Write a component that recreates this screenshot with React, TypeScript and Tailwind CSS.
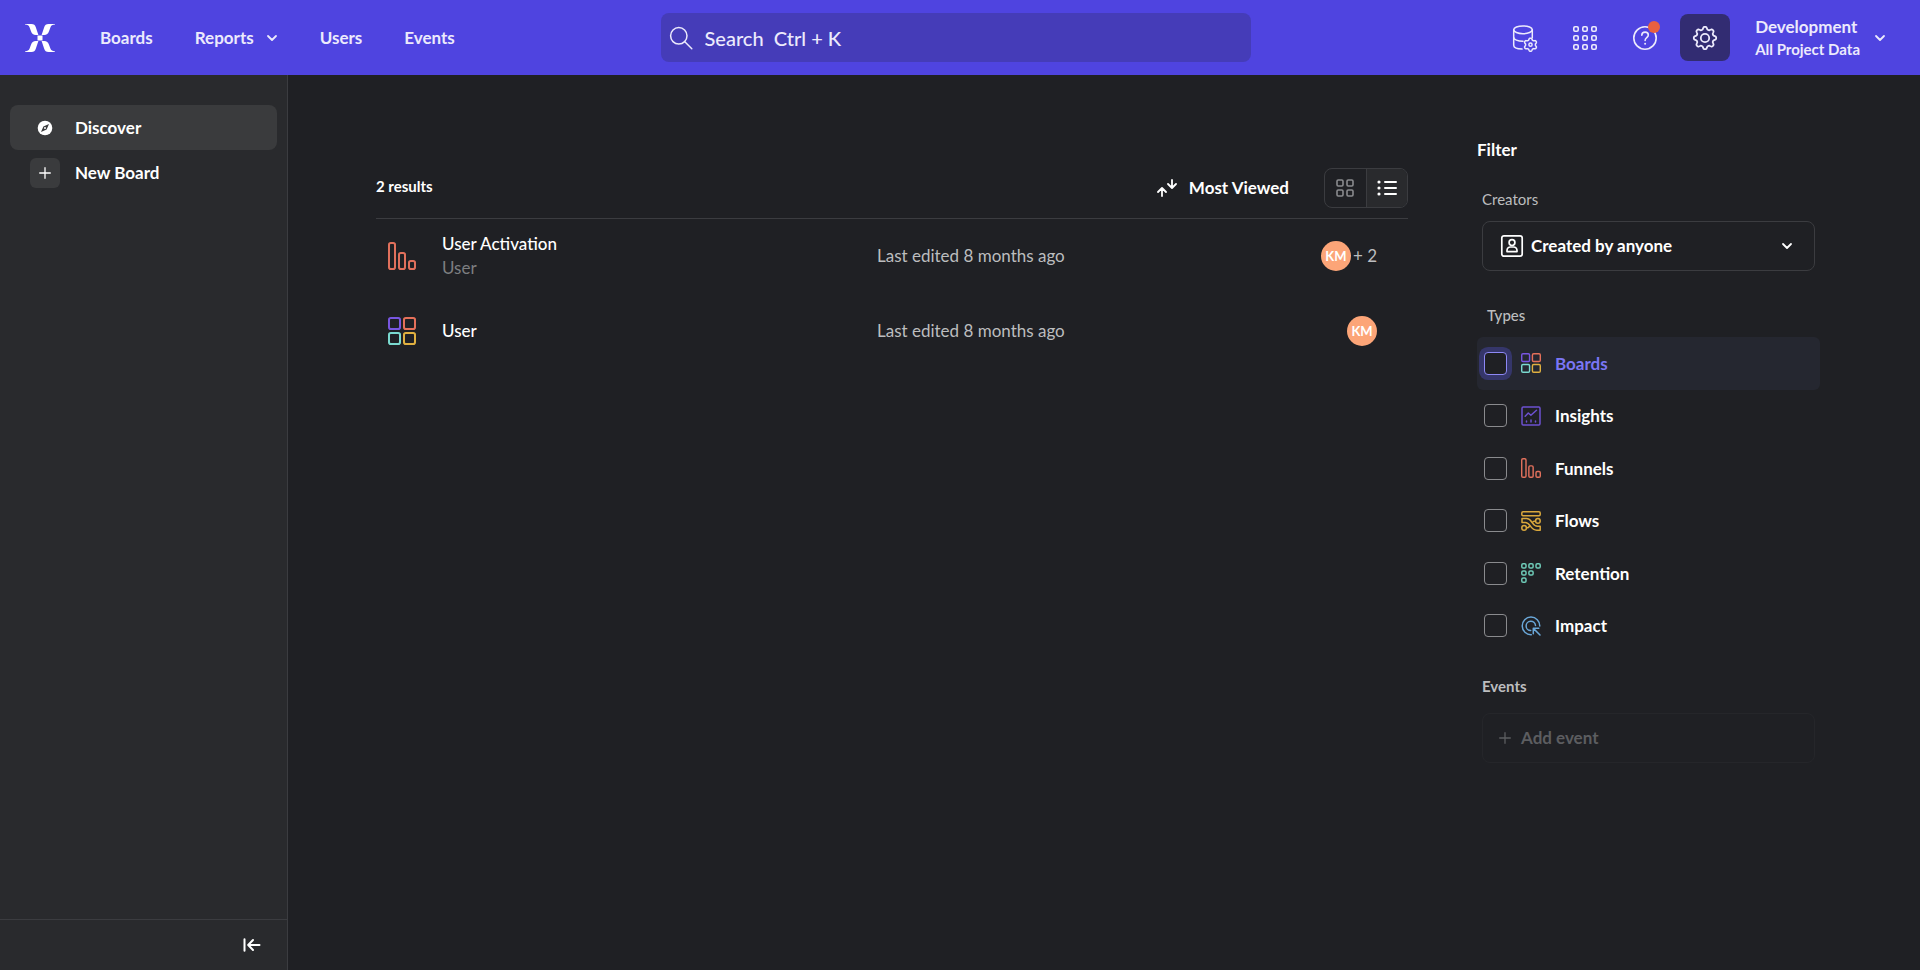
import React, { useState } from 'react';

type IconProps = {
  className?: string;
};

// closed wavy outline, one bump per tooth, first tooth pointing up
const gearPath = (cx: number, cy: number, r: number, depth: number, teeth: number) => {
  const points: string[] = [];
  for (let i = 0; i < 96; i++) {
    const a = (i / 96) * Math.PI * 2;
    const wave = Math.tanh(1.6 * Math.cos(teeth * a));
    const d = r + depth * wave;
    points.push(`${(cx + d * Math.sin(a)).toFixed(2)} ${(cy - d * Math.cos(a)).toFixed(2)}`);
  }
  return `M${points.join('L')}Z`;
};

const Logo = () => (
  <svg viewBox="0 0 30 28" className="h-7 w-[30px] fill-white" aria-hidden="true">
    <path d="M0 0h6.400c2.600 0 3.600.9 4.400 3.200L13.400 11h-2.600c-2.600 0-3.900-1.200-4.700-3.500L4.600 3.400C3.900 1.500 2.600.7 0 .6Z" />
    <path d="M30 0h-6.400c-2.600 0-3.600.9-4.400 3.200L16.600 11h2.600c2.600 0 3.900-1.200 4.700-3.500l1.500-4.100C26.100 1.500 27.400.7 30 .6Z" />
    <path d="M0 28h6.400c2.600 0 3.600-.9 4.400-3.200L13.400 17h-2.600c-2.600 0-3.900 1.200-4.700 3.500l-1.500 4.100c-.7 1.900-2 2.700-4.600 2.800Z" />
    <path d="M30 28h-6.400c-2.600 0-3.600-.9-4.400-3.200L16.600 17h2.600c2.600 0 3.900 1.200 4.700 3.500l1.500 4.100c.7 1.900 2 2.700 4.600 2.800Z" />
    <rect x="12.500" y="11.500" width="5" height="5" />
  </svg>
);

const ChevronIcon = ({ className }: IconProps) => (
  <svg viewBox="0 0 12 12" className={className} fill="none" stroke="currentColor" strokeWidth="1.800" strokeLinecap="round" strokeLinejoin="round" aria-hidden="true">
    <path d="M2 4l4 4 4-4" />
  </svg>
);

const SearchIcon = () => (
  <svg viewBox="0 0 24 24" className="h-6 w-6 shrink-0" fill="none" stroke="currentColor" strokeWidth="1.500" strokeLinecap="round" aria-hidden="true">
    <circle cx="9.800" cy="9.800" r="8.200" />
    <path d="M15.800 15.800l7 7" />
  </svg>
);

const DatabaseIcon = () => (
  <svg viewBox="0 0 26 28" className="h-7 w-[26px]" fill="none" stroke="currentColor" strokeWidth="1.500" strokeLinecap="round" strokeLinejoin="round" aria-hidden="true">
    <ellipse cx="11" cy="5.800" rx="9.300" ry="3.900" />
    <path d="M1.700 5.800v15.400c0 2.100 3.700 3.700 8.300 3.900M20.300 5.800v8" />
    <path d="M1.700 13.400c0 2.100 4.100 3.900 9.300 3.900" />
    <path d={gearPath(18.500, 20.700, 5.700, 0.9, 6)} fill="#4f44e0" />
    <circle cx="18.500" cy="20.700" r="1.600" />
  </svg>
);

const AppsIcon = () => (
  <svg viewBox="0 0 24 24" className="h-6 w-6" fill="none" stroke="currentColor" strokeWidth="1.600" aria-hidden="true">
    {[0.8, 9.8, 18.8].map((y) =>
      [0.8, 9.8, 18.8].map((x) => <rect key={`${x}-${y}`} x={x} y={y} width="4.400" height="4.400" rx="1.200" />)
    )}
  </svg>
);

const HelpIcon = () => (
  <svg viewBox="0 0 26 26" className="h-[26px] w-[26px]" fill="none" stroke="currentColor" strokeWidth="1.600" strokeLinecap="round" strokeLinejoin="round" aria-hidden="true">
    <circle cx="13" cy="13" r="11.200" />
    <path d="M9.800 10.300c0-2 1.400-3.200 3.300-3.200s3.200 1.200 3.200 2.900c0 2.600-3.200 2.700-3.200 5.400" />
    <path d="M13.100 18.700v.1" strokeWidth="2" />
  </svg>
);

const GearIcon = () => (
  <svg viewBox="0 0 26 26" className="h-[26px] w-[26px]" fill="none" stroke="currentColor" strokeWidth="1.800" strokeLinejoin="round" aria-hidden="true">
    <path d={gearPath(13, 13, 9.900, 1.400, 8)} />
    <circle cx="13" cy="13" r="4.200" />
  </svg>
);

const CompassIcon = () => (
  <svg viewBox="0 0 16 16" className="h-4 w-4" aria-hidden="true">
    <circle cx="8" cy="8" r="7.300" fill="#fff" />
    <path d="M12 4 9.600 9.600 4 12 6.400 6.400Z" fill="#3a3b3d" />
    <circle cx="8" cy="8" r="1" fill="#fff" />
  </svg>
);

const PlusIcon = () => (
  <svg viewBox="0 0 12 12" className="h-3 w-3" fill="none" stroke="currentColor" strokeWidth="1.300" strokeLinecap="round" aria-hidden="true">
    <path d="M6 .7v10.600M.7 6h10.600" />
  </svg>
);

const CollapseIcon = () => (
  <svg viewBox="0 0 18 14" className="h-[14px] w-[18px]" fill="none" stroke="currentColor" strokeWidth="2" strokeLinecap="round" strokeLinejoin="round" aria-hidden="true">
    <path d="M1.500 1.200v11.600M16.500 7H6M10 2 5.200 7l4.800 5" />
  </svg>
);

const SortIcon = () => (
  <svg viewBox="0 0 20 18" className="h-[18px] w-5" fill="none" stroke="currentColor" strokeWidth="1.800" strokeLinecap="round" strokeLinejoin="round" aria-hidden="true">
    <path d="M5 17V9.500M1 13l4-4 4 4" />
    <path d="M15 1v7.500M11 5l4 4 4-4" />
  </svg>
);

const GridIcon = () => (
  <svg viewBox="0 0 18 18" className="h-[18px] w-[18px]" fill="none" stroke="currentColor" strokeWidth="1.600" aria-hidden="true">
    <rect x="1" y="1" width="6" height="6" rx="1.200" />
    <rect x="11" y="1" width="6" height="6" rx="1.200" />
    <rect x="1" y="11" width="6" height="6" rx="1.200" />
    <rect x="11" y="11" width="6" height="6" rx="1.200" />
  </svg>
);

const ListIcon = () => (
  <svg viewBox="0 0 20 18" className="h-[18px] w-5" fill="none" stroke="currentColor" strokeWidth="2" strokeLinecap="round" aria-hidden="true">
    <path d="M8 3h11M8 9h11M8 15h11" />
    <path d="M2 3v.01M2 9v.01M2 15v.01" strokeWidth="3.200" />
  </svg>
);

const PersonIcon = () => (
  <svg viewBox="0 0 24 24" className="h-6 w-6" fill="none" stroke="currentColor" strokeWidth="1.700" strokeLinejoin="round" aria-hidden="true">
    <rect x="1.800" y="1.800" width="20.400" height="20.400" rx="2.200" />
    <circle cx="12" cy="8.600" r="2.900" />
    <path d="M7 17.600v-1c0-2.200 1.800-3.600 3.400-3.600h3.200c1.600 0 3.400 1.400 3.400 3.600v1Z" />
  </svg>
);

const BoardsIcon = ({ className }: IconProps) => (
  <svg viewBox="0 0 28 28" className={className} fill="none" strokeWidth="2" aria-hidden="true">
    <rect x="1" y="1" width="11" height="11" rx="1.800" stroke="#7856e0" />
    <rect x="16" y="1" width="11" height="11" rx="1.800" stroke="#e5705a" />
    <rect x="1" y="16" width="11" height="11" rx="1.800" stroke="#7ad9cf" />
    <rect x="16" y="16" width="11" height="11" rx="1.800" stroke="#e0b040" />
  </svg>
);

const FunnelsIcon = ({ className }: IconProps) => (
  <svg viewBox="0 0 28 28" className={className} fill="none" stroke="#e0705c" strokeWidth="2" aria-hidden="true">
    <rect x="1" y="1" width="6" height="26" rx="1.800" />
    <rect x="11" y="11" width="6" height="16" rx="1.800" />
    <rect x="21" y="19" width="6" height="8" rx="1.800" />
  </svg>
);

const InsightsIcon = ({ className }: IconProps) => (
  <svg viewBox="0 0 20 20" className={className} fill="none" stroke="#6c50cf" strokeWidth="1.500" strokeLinecap="round" strokeLinejoin="round" aria-hidden="true">
    <rect x="1" y="1" width="18" height="18" rx="1.200" />
    <path d="M4.200 10.200 7.300 7l2.600 2.300 5.600-5.100" />
    <path d="M5.500 15v1M10 14v2M14.500 15v1" />
  </svg>
);

const FlowsIcon = ({ className }: IconProps) => (
  <svg viewBox="0 0 20 20" className={className} fill="none" stroke="#d9a73c" strokeWidth="1.500" strokeLinejoin="round" aria-hidden="true">
    <rect x=".8" y=".8" width="18.400" height="4" rx="1.200" />
    <path d="M1 7.600h4.600c3.200 0 4.200 2 5.800 4.300s2.600 3.400 5 3.400h2.800v3.900h-3.400c-3.400 0-5-2-6.600-4.300S6.800 11.400 4.400 11.400H1Z" />
    <circle cx="16.900" cy="9.900" r="2.300" />
    <circle cx="3.100" cy="16.900" r="2.300" />
    <path d="M14.600 9.900c-2 0-2.700.6-3.400 1.700M5.400 16.900c1.700 0 2.700-.8 3.400-1.900" />
  </svg>
);

const RetentionIcon = ({ className }: IconProps) => (
  <svg viewBox="0 0 20 20" className={className} fill="none" stroke="#6fcbb8" strokeWidth="1.500" aria-hidden="true">
    <rect x=".8" y=".8" width="4.200" height="4.200" rx="1.300" />
    <rect x="7.900" y=".8" width="4.200" height="4.200" rx="1.300" />
    <rect x="15" y=".8" width="4.200" height="4.200" rx="1.300" />
    <rect x=".8" y="7.900" width="4.200" height="4.200" rx="1.300" />
    <rect x="7.900" y="7.900" width="4.200" height="4.200" rx="1.300" />
    <rect x=".8" y="15" width="4.200" height="4.200" rx="1.300" />
  </svg>
);

const ImpactIcon = ({ className }: IconProps) => (
  <svg viewBox="0 0 20 20" className={className} fill="none" stroke="#6aa7d8" strokeWidth="1.500" strokeLinecap="round" strokeLinejoin="round" aria-hidden="true">
    <path d="M10.300 18.700A8.800 8.800 0 1 1 18.800 10" />
    <path d="M9.700 14.600A4.700 4.700 0 1 1 14.500 9.500" />
    <path d="M12.300 17.800v-5.500h5.500M12.600 12.600l6.400 6.400" />
  </svg>
);

const results = [
  { name: 'User Activation', board: 'User', edited: 'Last edited 8 months ago', initials: 'KM', more: '+ 2', Icon: FunnelsIcon },
  { name: 'User', board: '', edited: 'Last edited 8 months ago', initials: 'KM', more: '', Icon: BoardsIcon },
];

const types = [
  { name: 'Boards', Icon: BoardsIcon },
  { name: 'Insights', Icon: InsightsIcon },
  { name: 'Funnels', Icon: FunnelsIcon },
  { name: 'Flows', Icon: FlowsIcon },
  { name: 'Retention', Icon: RetentionIcon },
  { name: 'Impact', Icon: ImpactIcon },
];

function Header() {
  return (
    <header className="grid h-[75px] grid-cols-[1fr_590px_1fr] items-center bg-[#4f44e0] pr-[34px] pl-[25px] text-[#eceafc]">
      <div className="flex items-center">
        <a href="#" aria-label="Home">
          <Logo />
        </a>
        <nav className="ml-[45px] flex items-center gap-[42px] text-[17px] font-bold">
          <a href="#">Boards</a>
          <button className="flex items-center gap-3">
            Reports
            <ChevronIcon className="h-3 w-3" />
          </button>
          <a href="#">Users</a>
          <a href="#">Events</a>
        </nav>
      </div>

      <label className="flex h-[49px] items-center gap-3 rounded-lg bg-[#453cb8] px-2">
        <SearchIcon />
        <input
          type="text"
          aria-label="Search"
          placeholder="Search  Ctrl + K"
          className="w-full bg-transparent text-[20px] font-medium outline-none placeholder:text-[#eceafc]"
        />
      </label>

      <div className="flex items-center justify-end">
        <div className="flex items-center gap-[35px]">
          <button aria-label="Data management">
            <DatabaseIcon />
          </button>
          <button aria-label="Apps">
            <AppsIcon />
          </button>
          <button aria-label="Help" className="relative">
            <HelpIcon />
            <span className="absolute -top-1 -right-0.5 h-3 w-3 rounded-full bg-[#e8603f]" />
          </button>
        </div>
        <button aria-label="Settings" className="ml-[22px] flex h-[47px] w-[50px] items-center justify-center rounded-lg bg-[#322c72]">
          <GearIcon />
        </button>
        <button className="ml-[25px] flex items-center gap-[14px] text-left font-bold">
          <span>
            <span className="block text-[17px] leading-[22px]">Development</span>
            <span className="block text-[15px] leading-[22px]">All Project Data</span>
          </span>
          <ChevronIcon className="h-3 w-3" />
        </button>
      </div>
    </header>
  );
}

function Sidebar() {
  return (
    <aside className="flex w-72 shrink-0 flex-col border-r border-[#3b3c40] bg-[#292a2d]">
      <nav className="flex-1 px-[10px] pt-[30px] text-[17px] font-bold text-white">
        <a href="#" className="flex h-[45px] items-center gap-[15px] rounded-lg bg-[#3a3b3d] px-5">
          <span className="flex w-[30px] justify-center">
            <CompassIcon />
          </span>
          Discover
        </a>
        <button className="flex h-[45px] w-full items-center gap-[15px] px-5">
          <span className="flex h-[30px] w-[30px] items-center justify-center rounded-md bg-[#3a3b3d]">
            <PlusIcon />
          </span>
          New Board
        </button>
      </nav>
      <div className="flex h-[51px] items-center justify-end border-t border-[#3b3c40] pr-[26px] text-white">
        <button aria-label="Collapse sidebar">
          <CollapseIcon />
        </button>
      </div>
    </aside>
  );
}

function Results() {
  return (
    <section className="min-w-0 flex-1 pt-[93px]">
      <div className="flex h-[51px] items-start justify-between border-b border-[#3b3c40] text-white">
        <h1 className="flex h-9 items-center text-[15px] font-bold">2 results</h1>
        <div className="flex items-center gap-[35px]">
          <button className="flex items-center gap-3 text-[17px] font-bold">
            <SortIcon />
            Most Viewed
          </button>
          <div className="flex h-10 w-[84px] overflow-hidden rounded-lg border border-[#3b3c40]">
            <button aria-label="Grid view" className="flex flex-1 items-center justify-center text-[#8a8b8e]">
              <GridIcon />
            </button>
            <button aria-label="List view" className="flex flex-1 items-center justify-center border-l border-[#3b3c40] bg-[#292a2d]">
              <ListIcon />
            </button>
          </div>
        </div>
      </div>

      <ul className="text-[17px] leading-6">
        {results.map(({ name, board, edited, initials, more, Icon }) => (
          <li key={name} className="grid h-[75px] grid-cols-[1fr_500px] items-center pr-[31px] pb-0.5 pl-3">
            <div className="flex items-center gap-[26px]">
              <Icon className="h-7 w-7" />
              <div>
                <a href="#" className="block font-medium text-white">{name}</a>
                {board && <p className="text-[#7d7e81]">{board}</p>}
              </div>
            </div>
            <div className="flex items-center justify-between text-[#bcbdbf]">
              <p>{edited}</p>
              <div className="flex items-center gap-0.5">
                <span className="flex h-[30px] w-[30px] items-center justify-center rounded-full bg-[#fca578] text-[13px] font-bold text-white">
                  {initials}
                </span>
                {more && <span>{more}</span>}
              </div>
            </div>
          </li>
        ))}
      </ul>
    </section>
  );
}

function Filter() {
  const [checked, setChecked] = useState<string[]>([]);

  const toggle = (name: string) => {
    setChecked(checked.includes(name) ? checked.filter((n) => n !== name) : [...checked, name]);
  };

  return (
    <aside className="w-[343px] shrink-0 pt-[63px]">
      <h2 className="text-[17px] leading-6 font-bold text-white">Filter</h2>

      <div className="px-[5px] pt-[27px]">
        <label htmlFor="creators" className="block text-[15px] leading-5 text-[#bcbdbf]">Creators</label>
        <div className="relative mt-3 text-white">
          <select
            id="creators"
            className="h-[50px] w-full appearance-none rounded-lg border border-[#3b3c40] bg-transparent pl-12 text-[17px] font-bold outline-none"
          >
            <option>Created by anyone</option>
          </select>
          <span className="pointer-events-none absolute inset-y-0 left-[18px] flex items-center">
            <PersonIcon />
          </span>
          <span className="pointer-events-none absolute inset-y-0 right-[22px] flex items-center">
            <ChevronIcon className="h-3 w-3" />
          </span>
        </div>
      </div>

      <fieldset className="pt-[34px]">
        <legend className="float-left w-full px-[10px] pb-3 text-[15px] leading-5 font-medium text-[#bcbdbf]">Types</legend>
        <div className="clear-both grid h-[315px] auto-rows-fr">
          {types.map(({ name, Icon }, i) => (
            <label
              key={name}
              className={`flex items-center rounded-md px-[7px] text-[17px] font-bold ${i === 0 ? 'bg-[#252730] text-[#7b76f5]' : 'text-white'}`}
            >
              <input
                type="checkbox"
                checked={checked.includes(name)}
                onChange={() => toggle(name)}
                className={`h-[23px] w-[23px] appearance-none rounded-[4px] border checked:bg-[#4f44e0] ${
                  i === 0 ? 'border-[#8d88f5] bg-[#1f2024] ring-5 ring-[#35366a]' : 'border-[#8a8b8e]'
                }`}
              />
              <Icon className="mx-[14px] h-5 w-5" />
              {name}
            </label>
          ))}
        </div>
      </fieldset>

      <div className="px-[5px] pt-6">
        <h3 className="text-[15px] leading-5 font-bold text-[#bcbdbf]">Events</h3>
        <button disabled className="mt-[17px] flex h-[50px] w-full items-center gap-[10px] rounded-lg border border-[#25262a] px-4 text-[17px] font-bold text-[#5c5d60]">
          <PlusIcon />
          Add event
        </button>
      </div>
    </aside>
  );
}

export default function App() {
  return (
    <div className="flex min-h-screen flex-col bg-[#1f2024] font-['Lato',sans-serif]">
      <Header />
      <div className="flex flex-1">
        <Sidebar />
        <main className="flex min-w-0 flex-1 gap-[69px] pr-[100px] pl-[88px]">
          <Results />
          <Filter />
        </main>
      </div>
    </div>
  );
}
